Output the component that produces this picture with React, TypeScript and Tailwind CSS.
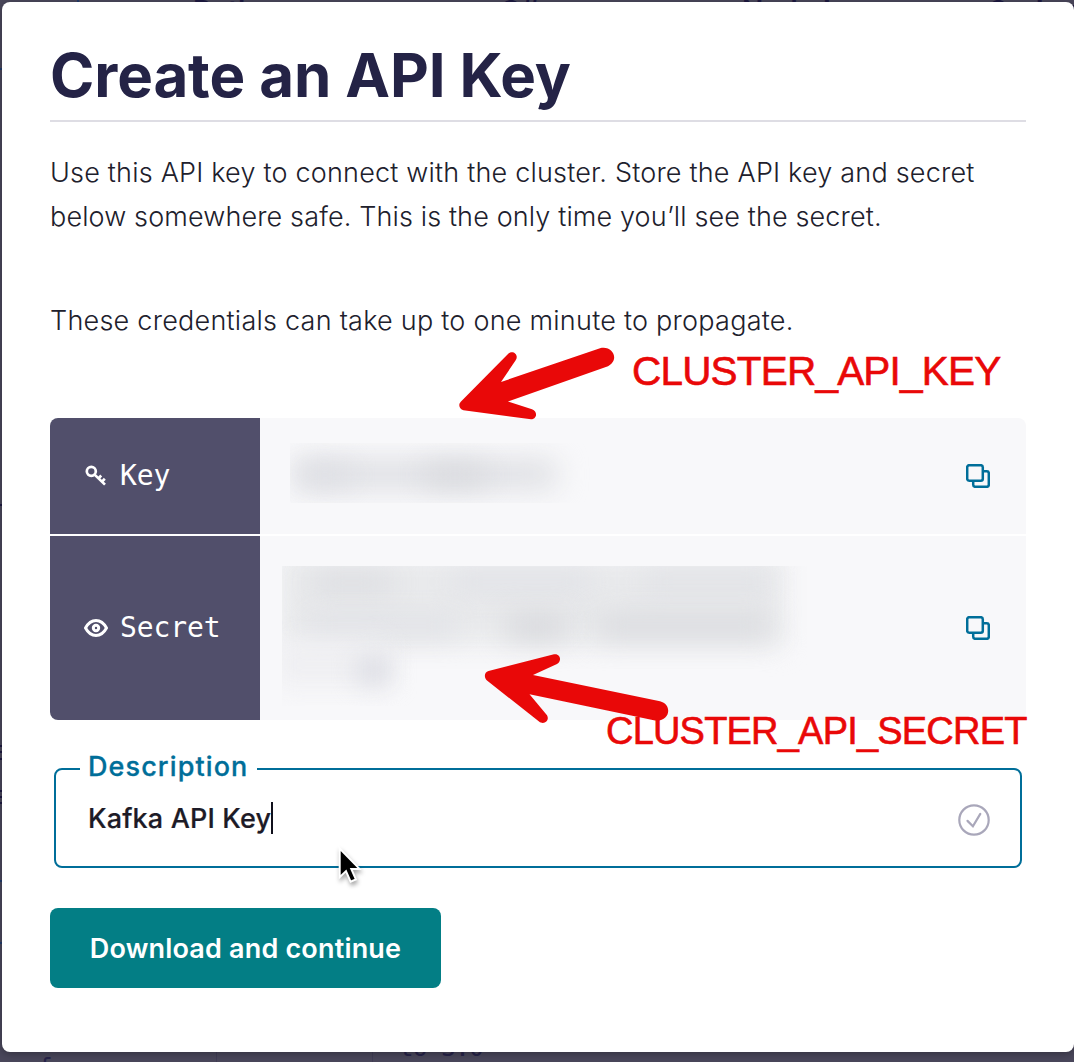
import React from "react";

const COPY = "M3.2 1.2h11.6a2 2 0 0 1 2 2v11.6a2 2 0 0 1-2 2H3.2a2 2 0 0 1-2-2V3.2a2 2 0 0 1 2-2z";

function KeyIcon() {
  return (
    <svg width="23" height="22" viewBox="0 0 23 22" fill="none" stroke="#fff" strokeWidth="2.7">
      <circle cx="7.3" cy="6.3" r="4.5" />
      <path d="M10.6 9.6L21 19.6M14.6 13.4l2.6-2.9M18 16.6l2.8-2.9" />
    </svg>
  );
}

function EyeIcon() {
  return (
    <svg width="24" height="18" viewBox="0 0 24 18" fill="none" stroke="#fff">
      <path d="M1.5 9C4.1 4.2 7.6 1.5 12 1.5S19.9 4.2 22.5 9C19.9 13.8 16.4 16.5 12 16.5S4.1 13.8 1.5 9z" strokeWidth="3" strokeLinejoin="round" />
      <circle cx="12" cy="9" r="2.7" strokeWidth="3" />
    </svg>
  );
}

function CopyIcon() {
  return (
    <svg width="24" height="24" viewBox="0 0 24 24" fill="none" stroke="#006e99" strokeWidth="2.5">
      <path d={COPY} />
      <path d="M17 7.2h3.8a2 2 0 0 1 2 2v11.6a2 2 0 0 1-2 2H9.2a2 2 0 0 1-2-2V17" />
    </svg>
  );
}

function Row({ icon, label, height, children }: { icon: React.ReactNode; label: string; height: string; children: React.ReactNode }) {
  return (
    <div className={`flex ${height}`}>
      <div className="flex w-[210px] shrink-0 items-center bg-[#514f6b] pl-[34px] font-['DejaVu_Sans_Mono',monospace] text-[28px] text-white">
        <span className="flex w-9 items-center">{icon}</span>
        <span className="leading-10 tracking-[-0.1px]">{label}</span>
      </div>
      <div className="flex flex-1 items-center justify-between bg-[#f8f8fa] pr-9">
        {children}
        <CopyIcon />
      </div>
    </div>
  );
}

/* Dimmed page that stays visible around the dialog's edges. */
function Backdrop() {
  return (
    <div className="absolute inset-0 flex flex-col justify-between overflow-hidden bg-[#4a475b] text-[#1d1941]">
      <div className="grid grid-cols-[307px_242px_247px_1fr] pl-[193px] text-[28px] font-semibold leading-[22px]">
        <span>Python</span>
        <span>C#</span>
        <span>Node.js</span>
        <span>Spring</span>
      </div>
      <div className="flex h-[26px] items-start font-['DejaVu_Sans_Mono',monospace] text-[24px] leading-6 text-[#27234a]">
        <span className="w-[216px] pl-[38px] pt-5">f</span>
        <span className="h-[26px] w-[156px] border-l border-[#403d56]" />
        <span className="h-[26px] border-l border-[#403d56] pl-[26px] tracking-[-0.4px]">to 3.0</span>
      </div>
    </div>
  );
}

/* Page marks along the uncovered left edge. */
function EdgeMarks() {
  return (
    <svg className="absolute left-0 top-0" width="80" height="1062" viewBox="0 0 80 1062">
      <path d="M78 0v2M0 69h2M0 881h2M0 943h2" stroke="#203b6b" strokeWidth="2" />
      <path d="M0 505h2M0 746h2M0 752h2M0 759h2M0 791h2M0 797h2M0 803h2" stroke="#1d1941" strokeWidth="2" />
    </svg>
  );
}

export default function App() {
  return (
    <div className="relative h-[1062px] w-[1074px] overflow-hidden pl-0.5 pt-0.5 font-['Inter',sans-serif]">
      <Backdrop />
      <EdgeMarks />
      <main className="relative h-[1050px] w-[1072px] rounded-lg bg-white px-12 pt-9 shadow-[0_2px_8px_rgba(0,0,0,0.3)]">
        <h1 className="h-[84px] w-[976px] whitespace-nowrap border-b-2 border-[#dedde4] text-[60px] font-bold leading-[74px] tracking-[-0.1px] text-[#242346]">Create an API Key</h1>
        <div className="mt-[29px] h-[88px] whitespace-nowrap text-[27px] font-light leading-[44px] text-[#20202c]">
          <p className="tracking-[0.2px]">Use this API key to connect with the cluster. Store the API key and secret</p>
          <p className="tracking-[0.13px]">below somewhere safe. This is the only time you’ll see the secret.</p>
        </div>
        <p className="mt-[60px] whitespace-nowrap text-[27px] font-light leading-[44px] tracking-[0.24px] text-[#20202c]">These credentials can take up to one minute to propagate.</p>

        <section className="mt-[75px] flex w-[976px] flex-col gap-0.5 overflow-hidden rounded-lg">
          <Row icon={<KeyIcon />} label="Key" height="h-[116px]">
            <div className="relative -mt-1.5 ml-[30px] h-[60px] w-[300px] overflow-hidden">
              <div className="absolute left-[2px] top-[16px] h-[30px] w-[266px] rounded-xl bg-[#dfe0e4] blur-[14px]" />
              <div className="absolute left-[10px] top-[21px] h-[22px] w-[50px] bg-[#dedfe4] blur-[13px]" />
              <div className="absolute left-[135px] top-[21px] h-[22px] w-[60px] bg-[#d9dade] blur-[13px]" />
            </div>
          </Row>
          <Row icon={<EyeIcon />} label="Secret" height="h-[184px]">
            <div className="relative ml-[22px] mt-[16px] h-[140px] w-[530px] overflow-hidden">
              <div className="absolute -left-1 -top-3 h-[92px] w-[506px] bg-[#e9eaec] blur-[13px]" />
              <div className="absolute left-[30px] top-[6px] h-[22px] w-[80px] bg-[#dcdde1] blur-[14px]" />
              <div className="absolute left-[170px] top-[6px] h-[20px] w-[140px] bg-[#e1e2e7] blur-[13px]" />
              <div className="absolute left-[360px] top-[6px] h-[20px] w-[130px] bg-[#e1e2e6] blur-[13px]" />
              <div className="absolute left-[25px] top-[50px] h-[20px] w-[150px] bg-[#e1e2e7] blur-[13px]" />
              <div className="absolute left-[225px] top-[49px] h-[24px] w-[60px] bg-[#d6d7db] blur-[14px]" />
              <div className="absolute left-[315px] top-[49px] h-[23px] w-[174px] bg-[#d9dade] blur-[14px]" />
              <div className="absolute -left-2 top-[76px] h-[44px] w-[115px] bg-[#efeff2] blur-[13px]" />
              <div className="absolute left-[75px] top-[92px] h-[25px] w-[34px] bg-[#dbdce3] blur-[12px]" />
            </div>
          </Row>
        </section>

        <div className="relative ml-1 mt-12 flex h-[100px] w-[968px] items-center justify-between rounded-lg border-2 border-[#006e99] pl-8 pr-[30px]">
          <span className="absolute left-6 top-[-23px] h-10 w-[177px] whitespace-nowrap bg-white pl-2 text-[27px] font-medium leading-10 tracking-[1.1px] text-[#006e99] [-webkit-text-stroke:0.3px_#006e99]">Description</span>
          <div className="flex items-center">
            <span className="whitespace-nowrap pt-0.5 text-[27px] font-medium leading-8 tracking-[0.15px] text-[#1d1b27] [-webkit-text-stroke:0.2px_#1d1b27]">Kafka API Key</span>
            <i className="h-8 w-0.5 bg-[#10101c]" />
          </div>
          <svg className="mt-1" width="32" height="32" viewBox="0 0 32 32" fill="none" stroke="#a9a7ba" strokeWidth="2.2">
            <circle cx="16" cy="16" r="14.7" />
            <path d="M9.5 16.9l5.4 5.4 7.4-12.4" strokeLinecap="round" />
          </svg>
        </div>

        <button className="mt-10 flex h-20 w-[391px] items-center justify-center whitespace-nowrap rounded-lg bg-[#037e85] pt-0.5 text-[27px] font-semibold tracking-[0.18px] text-white">Download and continue</button>
      </main>

      <svg className="pointer-events-none absolute left-0 top-0" width="1074" height="1062" viewBox="0 0 1074 1062">
        <g fill="#e90808">
          <path d="M508.5 353.5C513 349.5 519.5 355 515.5 360.5L501 382L600 348.2C613 345 620 360 608 366.3L508 401.5L532 409.3C538.5 412 536.5 419.5 531 419.3L463.5 410.3C459 409 458 404.5 461 401.5Z" />
          <path d="M488.5 671L554 654.3C560 653 562.5 661 557 664L533 675L660 701.3C673 704.5 670 722 655 720.5L529.5 694.2L547 715.2C550 720.5 544 725.5 539 721.5L487 680.5C483.5 677 484.5 672 488.5 671Z" />
        </g>
        <path d="M339.7 848.5v28.6l6.3-6 4.6 10.6 5.3-2.3-4.6-10.5h8.2z" fill="#000" stroke="#fff" strokeWidth="2" className="drop-shadow-[1px_3px_2px_rgba(0,0,0,0.35)]" />
      </svg>
      <span className="absolute left-[632px] top-[348px] whitespace-nowrap font-['Liberation_Sans',sans-serif] text-[40.5px] leading-[46px] tracking-[-0.8px] text-[#e90808] [-webkit-text-stroke:0.6px_#e90808]">CLUSTER_API_KEY</span>
      <span className="absolute left-[606px] top-[708px] whitespace-nowrap font-['Liberation_Sans',sans-serif] text-[38px] leading-[46px] tracking-[-0.8px] text-[#e90808] [-webkit-text-stroke:0.6px_#e90808]">CLUSTER_API_SECRET</span>
    </div>
  );
}
